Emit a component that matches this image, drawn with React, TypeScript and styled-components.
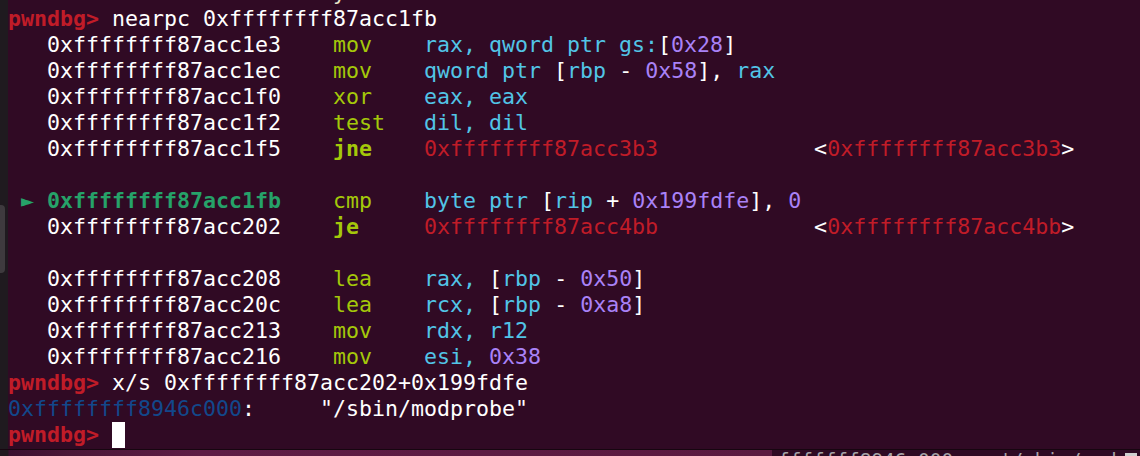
import React from "react";
import styled, { createGlobalStyle } from "styled-components";

const Global = createGlobalStyle`
  html, body { margin: 0; padding: 0; background: #300a24; }
  body { width: 1140px; height: 456px; overflow: hidden; }
`;

const C = {
  fg: "#ffffff",
  red: "#c01c28",
  green: "#26a269",
  mnem: "#a4c80a",
  reg: "#52c4e6",
  num: "#a982f7",
  blue: "#12488b",
};

const Screen = styled.div`
  display: flex;
  flex-direction: column;
  width: 1140px;
  height: 456px;
  background: #300a24;
`;

const Main = styled.div`
  display: flex;
  height: 449px;
`;

const SideStrip = styled.div`
  position: relative;
  width: 8px;
  flex: none;
  background: #1f1a1f;
`;

const SideHandle = styled.div`
  position: absolute;
  left: 0;
  top: 205px;
  width: 5px;
  height: 68px;
  background: #3e3a3e;
  border-radius: 0 4px 4px 0;
`;

const Terminal = styled.div`
  flex: 1;
  overflow: hidden;
  background: #300a24;
  font-family: "DejaVu Sans Mono", monospace;
  font-size: 21.6px;
  color: ${C.fg};
`;

const Rows = styled.div`
  display: flex;
  flex-direction: column;
  margin-top: -20px;
`;

const Line = styled.div`
  height: 26px;
  line-height: 26px;
  white-space: pre;
`;

const T = styled.span<{ $c?: string; $b?: boolean }>`
  color: ${(p) => p.$c || C.fg};
  font-weight: ${(p) => (p.$b ? "bold" : "normal")};
`;

const Cursor = styled.span`
  display: inline-block;
  width: 13px;
  height: 26px;
  background: #ffffff;
  vertical-align: top;
`;

const Divider = styled.div`
  height: 1px;
  background: #170610;
`;

const Footer = styled.div`
  display: flex;
  height: 6px;
  overflow: hidden;
`;

const Wallpaper = styled.div`
  width: 772px;
  flex: none;
  background: linear-gradient(
    to right,
    #1f1a1f 0,
    #1f1a1f 8px,
    #3a1030 9px,
    #4a1737 70px,
    #5e1c45 200px,
    #5a1a40 772px
  );
`;

const OtherWindow = styled.div`
  position: relative;
  flex: 1;
  background: #2f0a24;
  overflow: hidden;
`;

const OtherText = styled.div`
  font-family: "DejaVu Sans Mono", monospace;
  font-size: 19.4px;
  line-height: 22px;
  color: #a8a4a8;
  white-space: pre;
  margin-top: 0;
  padding-left: 6px;
`;

const OtherCursor = styled.div`
  position: absolute;
  right: 3px;
  bottom: 0;
  width: 12px;
  height: 3px;
  background: #cfcfcf;
`;

const ADDR_PAD = "   ";

type Ins = {
  addr: string;
  mn: string;
  ops: React.ReactNode;
  cur?: boolean;
  bold?: boolean;
};

const sp = (n: number) => " ".repeat(n);

const Reg = ({ children }: { children: React.ReactNode }) => <T $c={C.reg}>{children}</T>;
const Num = ({ children }: { children: React.ReactNode }) => <T $c={C.num}>{children}</T>;

const jumpOps = (target: string) => (
  <>
    <T $c={C.red}>{target}</T>
    {sp(12)}
    <T>{"<"}</T>
    <T $c={C.red}>{target}</T>
    <T>{">"}</T>
  </>
);

const block1: Ins[] = [
  {
    addr: "0xffffffff87acc1e3",
    mn: "mov",
    ops: (
      <>
        <Reg>rax, qword ptr gs:</Reg>
        <T>[</T>
        <Num>0x28</Num>
        <T>]</T>
      </>
    ),
  },
  {
    addr: "0xffffffff87acc1ec",
    mn: "mov",
    ops: (
      <>
        <Reg>qword ptr </Reg>
        <T>[</T>
        <Reg>rbp</Reg>
        <T> - </T>
        <Num>0x58</Num>
        <T>], </T>
        <Reg>rax</Reg>
      </>
    ),
  },
  { addr: "0xffffffff87acc1f0", mn: "xor", ops: <Reg>eax, eax</Reg> },
  { addr: "0xffffffff87acc1f2", mn: "test", ops: <Reg>dil, dil</Reg> },
  { addr: "0xffffffff87acc1f5", mn: "jne", bold: true, ops: jumpOps("0xffffffff87acc3b3") },
];

const block2: Ins[] = [
  {
    addr: "0xffffffff87acc1fb",
    mn: "cmp",
    cur: true,
    ops: (
      <>
        <Reg>byte ptr </Reg>
        <T>[</T>
        <Reg>rip</Reg>
        <T> + </T>
        <Num>0x199fdfe</Num>
        <T>], </T>
        <Num>0</Num>
      </>
    ),
  },
  { addr: "0xffffffff87acc202", mn: "je", bold: true, ops: jumpOps("0xffffffff87acc4bb") },
];

const block3: Ins[] = [
  {
    addr: "0xffffffff87acc208",
    mn: "lea",
    ops: (
      <>
        <Reg>rax, </Reg>
        <T>[</T>
        <Reg>rbp</Reg>
        <T> - </T>
        <Num>0x50</Num>
        <T>]</T>
      </>
    ),
  },
  {
    addr: "0xffffffff87acc20c",
    mn: "lea",
    ops: (
      <>
        <Reg>rcx, </Reg>
        <T>[</T>
        <Reg>rbp</Reg>
        <T> - </T>
        <Num>0xa8</Num>
        <T>]</T>
      </>
    ),
  },
  { addr: "0xffffffff87acc213", mn: "mov", ops: <Reg>rdx, r12</Reg> },
  {
    addr: "0xffffffff87acc216",
    mn: "mov",
    ops: (
      <>
        <Reg>esi, </Reg>
        <Num>0x38</Num>
      </>
    ),
  },
];

const InsLine = ({ ins }: { ins: Ins }) => (
  <Line>
    {ins.cur ? (
      <>
        <T $c={C.green}> ► </T>
        <T $c={C.green} $b>
          {ins.addr}
        </T>
      </>
    ) : (
      <>
        <T>{ADDR_PAD}</T>
        <T>{ins.addr}</T>
      </>
    )}
    {sp(4)}
    <T $c={C.mnem} $b={ins.bold}>
      {ins.mn}
    </T>
    {sp(7 - ins.mn.length)}
    {ins.ops}
  </Line>
);

const Prompt = () => (
  <T $c={C.red} $b>
    {"pwndbg> "}
  </T>
);

export default function App() {
  return (
    <>
      <Global />
      <Screen>
        <Main>
          <SideStrip>
            <SideHandle />
          </SideStrip>
          <Terminal>
            <Rows>
              <Line>
                {sp(25)}
                <T $c="#e8e4c8">y</T>
              </Line>
              <Line>
                <Prompt />
                <T>nearpc 0xffffffff87acc1fb</T>
              </Line>
              {block1.map((i) => (
                <InsLine key={i.addr} ins={i} />
              ))}
              <Line> </Line>
              {block2.map((i) => (
                <InsLine key={i.addr} ins={i} />
              ))}
              <Line> </Line>
              {block3.map((i) => (
                <InsLine key={i.addr} ins={i} />
              ))}
              <Line>
                <Prompt />
                <T>x/s 0xffffffff87acc202+0x199fdfe</T>
              </Line>
              <Line>
                <T $c={C.blue}>0xffffffff8946c000</T>
                <T>{":     \"/sbin/modprobe\""}</T>
              </Line>
              <Line>
                <Prompt />
                <Cursor />
              </Line>
            </Rows>
          </Terminal>
        </Main>
        <Divider />
        <Footer>
          <Wallpaper />
          <OtherWindow>
            <OtherText>{"fffffff8946c000 ◂— '/sbin/modprobe_'"}</OtherText>
            <OtherCursor />
          </OtherWindow>
        </Footer>
      </Screen>
    </>
  );
}
